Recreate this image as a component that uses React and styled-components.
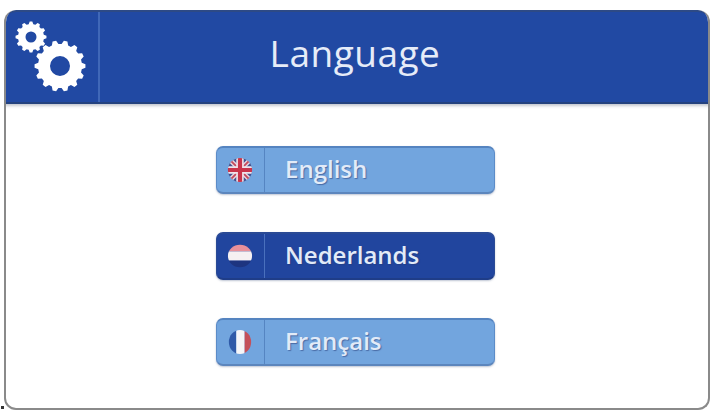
import styled, { createGlobalStyle } from 'styled-components';

const GlobalStyle = createGlobalStyle`
  html, body {
    margin: 0;
    background: #fff;
  }
`;

const Page = styled.div`
  position: relative;
  width: 712px;
  height: 412px;
  box-sizing: border-box;
  padding: 10px 2px 2px 4px;
  overflow: hidden;
  font-family: 'Open Sans', 'Liberation Sans', sans-serif;
`;

const Stray = styled.span`
  position: absolute;
  left: 1px;
  bottom: 3px;
  width: 3px;
  height: 3px;
  background: #333;
`;

const Panel = styled.div`
  display: flex;
  flex-direction: column;
  height: 100%;
  box-sizing: border-box;
  background: #fff;
  border: 2px solid #8a8a8a;
  border-top: 0;
  border-radius: 12px;
  overflow: hidden;
`;

const Header = styled.header`
  display: flex;
  align-items: stretch;
  height: 94px;
  margin: 0 -2px;
  flex-shrink: 0;
  background: #2149a3;
  border-top: 2px solid #2d4a86;
  border-bottom: 2px solid #24427f;
  box-sizing: border-box;
  border-radius: 12px 12px 0 0;
  box-shadow: 0 2px 3px rgba(60, 70, 100, 0.3);
`;

const IconCell = styled.div`
  width: 94px;
  flex-shrink: 0;
  border-right: 2px solid #4068b8;
  display: flex;
  align-items: center;
  justify-content: center;
`;

const Title = styled.h1`
  flex: 1;
  margin: 0;
  padding: 0 100px 10px 0;
  display: flex;
  align-items: center;
  justify-content: center;
  color: #e6ecf8;
  font-size: 37px;
  font-weight: 400;
  letter-spacing: 0.5px;
`;

const LanguageList = styled.nav`
  flex: 1;
  display: flex;
  flex-direction: column;
  align-items: center;
  gap: 38px;
  padding: 42px 3px 0 0;
`;

const LanguageButton = styled.button`
  display: flex;
  align-items: stretch;
  width: 279px;
  height: 48px;
  padding: 0;
  box-sizing: border-box;
  cursor: pointer;
  font-family: inherit;
  border-radius: 7px;
  border: 1px solid ${({ $active }) => ($active ? '#2a4a95' : '#5c8cc8')};
  border-top: 2px solid ${({ $active }) => ($active ? '#2a4a95' : '#5584c0')};
  border-bottom: 2px solid ${({ $active }) => ($active ? '#1f3d88' : '#5c86bd')};
  background: ${({ $active }) => ($active ? '#21459e' : '#72a5de')};
  box-shadow: 0 1px 2px rgba(70, 90, 130, 0.35);
`;

const FlagCell = styled.span`
  width: 48px;
  flex-shrink: 0;
  display: flex;
  align-items: center;
  justify-content: center;
  border-right: 1px solid ${({ $active }) => ($active ? '#4a70bd' : '#5585c2')};
  padding-right: 2px;
  box-sizing: border-box;

  svg {
    filter: blur(0.6px);
  }
`;

const Label = styled.span`
  padding: 0 0 3px 20px;
  display: flex;
  align-items: center;
  color: #e2ebf8;
  font-size: 24px;
  font-weight: 600;
  text-shadow: 1px 1px 1px rgba(40, 60, 120, 0.55);
`;

const gearPath = (cx, cy, outer, inner, hole, teeth) => {
  const step = (Math.PI * 2) / teeth;
  const pts = [];
  for (let i = 0; i < teeth; i++) {
    const a = i * step;
    const at = (r, t) =>
      `${(cx + r * Math.cos(a + t * step)).toFixed(2)} ${(cy + r * Math.sin(a + t * step)).toFixed(2)}`;
    pts.push(at(inner, -0.34), at(outer, -0.16), at(outer, 0.16), at(inner, 0.34));
  }
  return (
    `M${pts.join('L')}Z` +
    `M${cx + hole} ${cy}A${hole} ${hole} 0 1 0 ${cx - hole} ${cy}A${hole} ${hole} 0 1 0 ${cx + hole} ${cy}Z`
  );
};

const Gears = () => (
  <svg width="94" height="90" viewBox="0 0 94 90">
    <path d={gearPath(27, 25, 15.5, 13, 5.5, 12)} fill="#fff" fillRule="evenodd" />
    <path d={gearPath(56, 54, 25.5, 22, 10, 14)} fill="#fff" fillRule="evenodd" />
  </svg>
);

const UkFlag = () => (
  <svg width="26" height="26" viewBox="0 0 28 28">
    <clipPath id="uk-clip">
      <circle cx="14" cy="14" r="13" />
    </clipPath>
    <g clipPath="url(#uk-clip)">
      <rect width="28" height="28" fill="#45528f" />
      <path d="M0 0L28 28M28 0L0 28" stroke="#e8d8e0" strokeWidth="5" />
      <path d="M0 0L28 28M28 0L0 28" stroke="#c44a5c" strokeWidth="2" />
      <path d="M14 0V28M0 14H28" stroke="#efe4ea" strokeWidth="8" />
      <path d="M14 0V28M0 14H28" stroke="#c9344a" strokeWidth="4.5" />
    </g>
  </svg>
);

const NlFlag = () => (
  <svg width="26" height="26" viewBox="0 0 28 28">
    <clipPath id="nl-clip">
      <ellipse cx="14" cy="14" rx="13" ry="12" />
    </clipPath>
    <g clipPath="url(#nl-clip)">
      <rect width="28" height="9" fill="#e8909a" />
      <rect y="9" width="28" height="10" fill="#f6f0f2" />
      <rect y="19" width="28" height="9" fill="#1d3480" />
    </g>
  </svg>
);

const FrFlag = () => (
  <svg width="26" height="26" viewBox="0 0 28 28">
    <clipPath id="fr-clip">
      <ellipse cx="14" cy="14" rx="12" ry="13" />
    </clipPath>
    <g clipPath="url(#fr-clip)">
      <rect width="10" height="28" fill="#2f5aa8" />
      <rect x="10" width="9" height="28" fill="#f6f6f8" />
      <rect x="19" width="9" height="28" fill="#c4505a" />
    </g>
  </svg>
);

const languages = [
  { name: 'English', Flag: UkFlag },
  { name: 'Nederlands', Flag: NlFlag, active: true },
  { name: 'Français', Flag: FrFlag },
];

const App = () => (
  <Page>
    <GlobalStyle />
    <Panel>
      <Header>
        <IconCell>
          <Gears />
        </IconCell>
        <Title>Language</Title>
      </Header>
      <LanguageList>
        {languages.map(({ name, Flag, active }) => (
          <LanguageButton key={name} $active={active}>
            <FlagCell $active={active}>
              <Flag />
            </FlagCell>
            <Label>{name}</Label>
          </LanguageButton>
        ))}
      </LanguageList>
    </Panel>
    <Stray />
  </Page>
);

export default App;
